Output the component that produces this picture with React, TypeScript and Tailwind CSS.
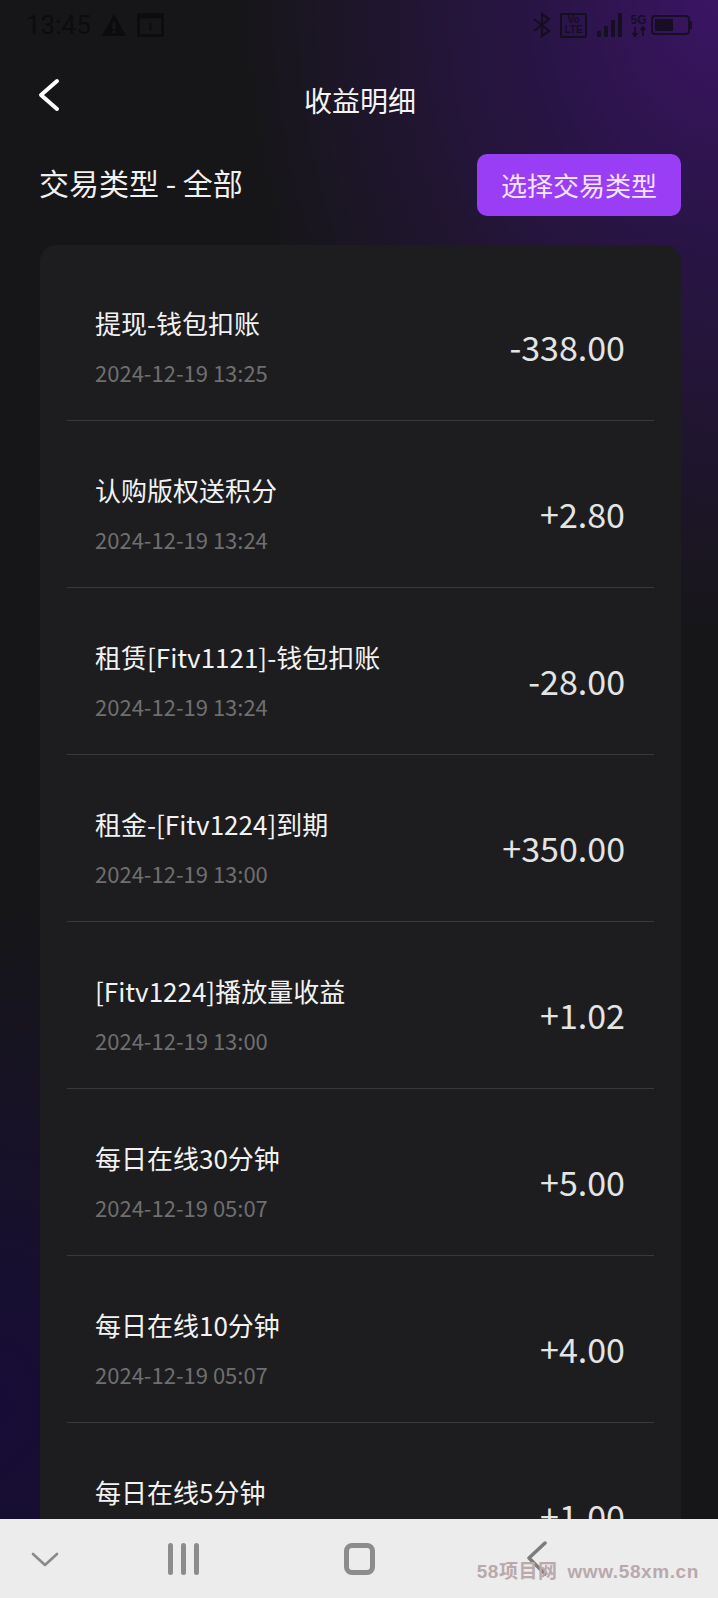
const rows = [
    { title: "提现-钱包扣账", time: "2024-12-19 13:25", amount: "-338.00" },
    { title: "认购版权送积分", time: "2024-12-19 13:24", amount: "+2.80" },
    { title: "租赁[Fitv1121]-钱包扣账", time: "2024-12-19 13:24", amount: "-28.00" },
    { title: "租金-[Fitv1224]到期", time: "2024-12-19 13:00", amount: "+350.00" },
    { title: "[Fitv1224]播放量收益", time: "2024-12-19 13:00", amount: "+1.02" },
    { title: "每日在线30分钟", time: "2024-12-19 05:07", amount: "+5.00" },
    { title: "每日在线10分钟", time: "2024-12-19 05:07", amount: "+4.00" },
    { title: "每日在线5分钟", time: "2024-12-19 05:07", amount: "+1.00" },
];

const StatusBar = () => (
    <div className="h-[50px] shrink-0 pl-[26px] pr-[26px] flex items-center justify-between text-[#0c0c0e]">
        <div className="flex items-center gap-[10px]">
            <span className="text-[26px] leading-none font-['Roboto',sans-serif]">13:45</span>
            <svg width="26" height="24" viewBox="0 0 26 24" fill="currentColor">
                <path fillRule="evenodd" d="M13 1 L25 23 H1 Z M11.5 9 V16 H14.5 V9 Z M11.5 17.5 V20 H14.5 V17.5 Z" />
            </svg>
            <svg width="28" height="26" viewBox="0 0 28 26" fill="none" stroke="currentColor">
                <rect x="1.5" y="2.5" width="24" height="21" strokeWidth="2.5" />
                <path d="M1.5 5 H25.5" strokeWidth="2.5" />
                <path d="M13.5 11 V19" strokeWidth="2" />
            </svg>
        </div>
        <div className="flex items-center gap-[8px] opacity-70">
            <svg width="20" height="26" viewBox="0 0 20 26" fill="none" stroke="currentColor" strokeWidth="2.2">
                <path d="M2 7 L17 19 L10 24 V2 L17 7 L2 19" />
            </svg>
            <div className="w-[27px] h-[25px] border-2 border-current rounded-[2px] flex flex-col items-center justify-center text-[10px] leading-[10px] font-bold font-['Liberation_Sans',sans-serif]">
                <span>Vo</span>
                <span>LTE</span>
            </div>
            <div className="flex items-end gap-[3px] h-[24px] ml-[2px]">
                <div className="w-[4px] h-[6px] bg-current" />
                <div className="w-[4px] h-[11px] bg-current" />
                <div className="w-[4px] h-[17px] bg-current" />
                <div className="w-[4px] h-[24px] bg-current" />
            </div>
            <div className="flex flex-col items-center w-[17px]">
                <span className="text-[12px] leading-[12px] font-bold font-['Liberation_Sans',sans-serif]">5G</span>
                <svg width="16" height="11" viewBox="0 0 16 11" fill="none" stroke="currentColor" strokeWidth="1.8">
                    <path d="M4 1 V10 M1.5 7 L4 10 L6.5 7 M12 10 V1 M9.5 4 L12 1 L14.5 4" />
                </svg>
            </div>
            <div className="flex items-center ml-[-4px]">
                <div className="w-[39px] h-[20px] rounded-[4px] border-2 border-current p-[2px]">
                    <div className="w-[18px] h-full bg-current" />
                </div>
                <div className="w-[2px] h-[8px] bg-current" />
            </div>
        </div>
    </div>
);

const NavBar = () => (
    <div className="h-[79px] shrink-0 bg-[#ececec] relative flex items-center">
        <div className="w-[90px] flex justify-center mt-[2px]">
            <svg width="28" height="16" viewBox="0 0 28 16" fill="none" stroke="#8a8a8a" strokeWidth="2.6" strokeLinecap="round" strokeLinejoin="round">
                <path d="M2 2 L14 13 L26 2" />
            </svg>
        </div>
        <div className="ml-[78px] flex gap-[8px] mt-[1px]">
            <div className="w-[5px] h-[32px] rounded-full bg-[#8c8c8c]" />
            <div className="w-[5px] h-[32px] rounded-full bg-[#8c8c8c]" />
            <div className="w-[5px] h-[32px] rounded-full bg-[#8c8c8c]" />
        </div>
        <div className="ml-[145px] w-[31px] h-[32px] rounded-[8px] border-[5px] border-[#8c8c8c] mt-[1px]" />
        <svg className="ml-[151px] mt-[1px]" width="22" height="36" viewBox="0 0 22 36" fill="none" stroke="#7c7c7c" strokeWidth="3.5" strokeLinecap="round" strokeLinejoin="round">
            <path d="M19 2 L3 17 L19 33" />
        </svg>
        {/* watermark */}
        <div className="absolute right-[19px] top-[43px] flex items-center gap-[10px] text-[#b9a9ad] text-[19px] leading-none font-bold font-['Liberation_Sans','Noto_Sans_CJK_SC',sans-serif]">
            <span className="tracking-[0.5px]">58项目网</span>
            <span className="tracking-[0.6px]">www.58xm.cn</span>
        </div>
    </div>
);

export default function App() {
    return (
        <div className="w-[718px] h-[1598px] flex flex-col overflow-hidden text-white font-['Noto_Sans_CJK_SC','Noto_Sans',sans-serif] bg-[#161618] bg-[radial-gradient(ellipse_480px_640px_at_100%_0%,#3b1563_0%,#2a1448_35%,rgba(22,22,24,0)_100%),radial-gradient(ellipse_300px_500px_at_0%_88%,#170c38_0%,rgba(22,22,24,0)_100%)]">
            <div className="flex-1 min-h-0 overflow-hidden flex flex-col">
                <StatusBar />
                <div className="h-[100px] shrink-0 relative flex items-center justify-center">
                    <svg className="absolute left-[36px] top-[27px]" width="28" height="38" viewBox="0 0 28 38" fill="none" stroke="#fff" strokeWidth="4" strokeLinecap="round" strokeLinejoin="round">
                        <path d="M21 4 L5 18 L21 32" />
                    </svg>
                    <h1 className="text-[28px] leading-none font-normal ml-[2px] text-[#f4f4f4]">收益明细</h1>
                </div>
                <div className="shrink-0 flex items-center justify-between pl-[39px] pr-[37px] mt-[4px]">
                    <span className="text-[30px] leading-none mt-[-6px] text-[#f0f0f0]">交易类型 - 全部</span>
                    <button className="w-[204px] h-[62px] rounded-[10px] bg-[#9a3ef5] text-[26px] leading-none text-[#f3e4ff]">
                        选择交易类型
                    </button>
                </div>
                <div className="mt-[29px] mx-[40px] w-[641px] rounded-t-[16px] bg-[#1d1d1f] pt-[9px] px-[27px] shrink-0">
                    {rows.map((r, i) => (
                        <div key={i} className="h-[167px] pt-[19px] border-b border-[#39393b] pl-[28px] pr-[29px] flex items-center justify-between">
                            <div className="flex flex-col gap-[17px]">
                                <p className="text-[26px] leading-[34px] text-[#f2f2f2]">{r.title}</p>
                                <p className="text-[22px] leading-[30px] text-[#6f6f70]">{r.time}</p>
                            </div>
                            <p className="text-[34px] leading-none text-[#e4e4e4]">{r.amount}</p>
                        </div>
                    ))}
                </div>
            </div>
            <NavBar />
        </div>
    );
}
